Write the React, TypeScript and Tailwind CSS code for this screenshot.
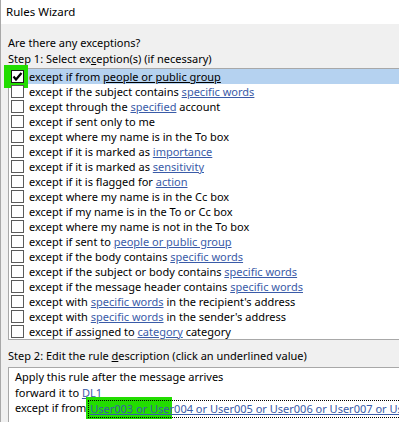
import React from "react";

type Part = string | { link: string };

const rows: Part[][] = [
  ["except if from ", { link: "people or public group" }],
  ["except if the subject contains ", { link: "specific words" }],
  ["except through the ", { link: "specified" }, " account"],
  ["except if sent only to me"],
  ["except where my name is in the To box"],
  ["except if it is marked as ", { link: "importance" }],
  ["except if it is marked as ", { link: "sensitivity" }],
  ["except if it is flagged for ", { link: "action" }],
  ["except where my name is in the Cc box"],
  ["except if my name is in the To or Cc box"],
  ["except where my name is not in the To box"],
  ["except if sent to ", { link: "people or public group" }],
  ["except if the body contains ", { link: "specific words" }],
  ["except if the subject or body contains ", { link: "specific words" }],
  ["except if the message header contains ", { link: "specific words" }],
  ["except with ", { link: "specific words" }, " in the recipient's address"],
  ["except with ", { link: "specific words" }, " in the sender's address"],
  ["except if assigned to ", { link: "category" }, " category"],
];

function Checkbox({ checked }: { checked?: boolean }) {
  return (
    <div
      className={`relative z-10 flex h-[13px] w-[13px] shrink-0 items-center justify-center bg-white border ${
        checked ? "border-[#1a1a1a]" : "border-[#5a5a5a]"
      }`}
    >
      {checked && (
        <svg width="11" height="11" viewBox="0 0 11 11">
          <path d="M1.5 5.5 L4 8.5 L9.5 2" fill="none" stroke="#000" strokeWidth="2.2" />
        </svg>
      )}
    </div>
  );
}

export default function App() {
  return (
    <div
      className="relative h-[422px] w-[399px] overflow-hidden border-l border-[#a8a8a8] bg-[#f0f0f0] text-[11px] text-black"
      style={{ fontFamily: '"Noto Sans", "Open Sans", sans-serif' }}
    >
      {/* Title bar */}
      <div className="flex h-[24px] items-center bg-white pl-[5px] text-[11.5px]">Rules Wizard</div>

      {/* green marks */}
      <div className="absolute left-[3px] top-[65px] h-[23px] w-[24px] bg-[#22dd00]" />
      <div className="absolute left-[85px] top-[397px] h-[22px] w-[86px] bg-[#22dd00]" />

      <div className="pl-[7px]">
        <div className="mt-[11px] leading-[16px]">Are there any exceptions?</div>
        <div className="leading-[16px]">
          Step 1: Select ex<span className="underline">c</span>eption(s) (if necessary)
        </div>

        {/* Condition list */}
        <div className="mt-[1px] w-[420px] border border-[#a8a8a8] bg-white">
          {rows.map((parts, i) => (
            <div
              key={i}
              className={`flex h-[15px] items-center gap-[5px] pl-[2px] ${i === 0 ? "bg-[#b5d2f0]" : ""}`}
            >
              <Checkbox checked={i === 0} />
              <span className="whitespace-nowrap leading-[15px]">
                {parts.map((p, j) =>
                  typeof p === "string" ? (
                    <span key={j}>{p}</span>
                  ) : (
                    <span key={j} className={`underline ${i === 0 ? "text-black" : "text-[#3a5ba8]"}`}>
                      {p.link}
                    </span>
                  )
                )}
              </span>
            </div>
          ))}
        </div>

        <div className="mt-[8px] leading-[16px]">
          Step 2: Edit the rule <span className="underline">d</span>escription (click an underlined value)
        </div>

        {/* Description box */}
        <div className="mt-[3px] h-[80px] w-[420px] border border-[#a8a8a8] bg-white pl-[6px] pt-[1px]">
          <div className="leading-[15.5px]">Apply this rule after the message arrives</div>
          <div className="leading-[15.5px]">
            forward it to <span className="text-[#3a5ba8] underline">DL1</span>
          </div>
          <div className="flex whitespace-nowrap leading-[15.5px]">
            <span>except if from</span>
            <span className="relative z-10 ml-[2px] border border-dotted border-black pl-[1px] text-[#3a5ba8] underline">
              User003 or User004 or User005 or User006 or User007 or User008
            </span>
          </div>
        </div>
      </div>
    </div>
  );
}
